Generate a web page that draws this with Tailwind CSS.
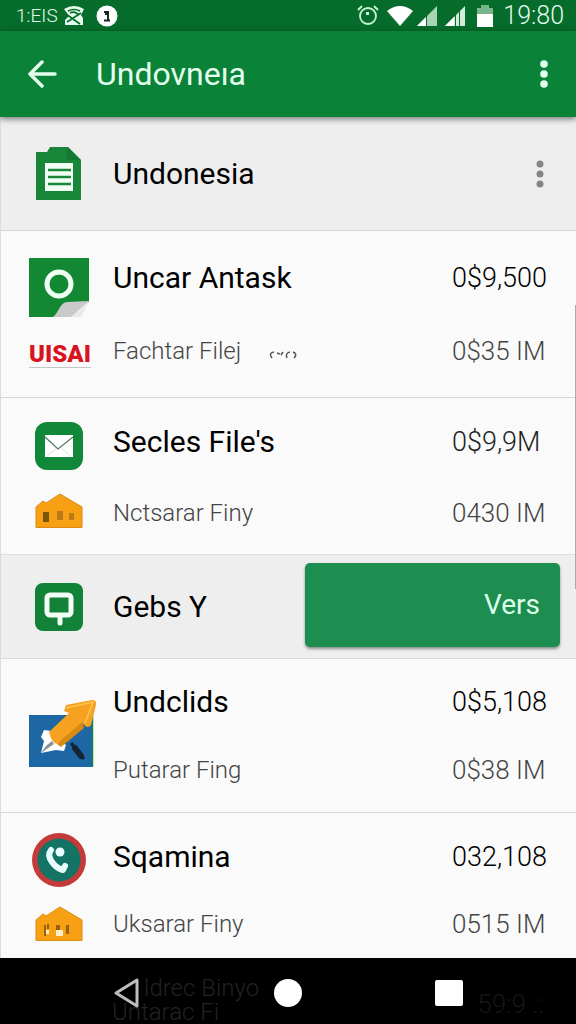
<!DOCTYPE html>
<html lang="en">
<head>
<meta charset="utf-8">
<meta name="viewport" content="width=device-width, initial-scale=1">
<title>Undonesia</title>
<script src="https://cdn.jsdelivr.net/npm/@tailwindcss/browser@4"></script>
</head>
<body class="flex min-h-screen flex-col overflow-x-hidden bg-[#fafafa] font-[Roboto,sans-serif] text-black">
<svg class="hidden" aria-hidden="true">
  <symbol id="house" viewBox="0 0 48 36">
    <path fill="#f7a014" d="M1 14 8 8l3 2L25 1l22 13v21H1z"/>
    <path fill="none" stroke="#db8b12" d="M1 14 8 8l3 2L25 1l22 13v20.500H1z"/>
  </symbol>
</svg>

<div class="flex h-[31px] shrink-0 items-center bg-[#066c2b] pr-3 pl-4 text-[#e4faec]">
  <span class="w-10 text-[19px] leading-none font-light">1:EIS</span>
  <svg class="ml-2 h-5 w-5" viewBox="0 0 20 20" aria-hidden="true"><path fill="#e4faec" d="M0 3q10-6 20 0l-3 6 2 3v7H1v-5l4-4z"/><path fill="none" stroke="#066c2b" stroke-width="1.700" d="M4 5q6-3 12 0M2 8l14 10M17 7 3 16M6 7q4-2 8 1"/></svg>
  <svg class="ml-3 h-[22px] w-[22px]" viewBox="0 0 22 22" aria-hidden="true"><circle cx="11" cy="11" r="10.500" fill="#fff"/><path d="M8 7h4v8M8 15.500h6M9 9h3" fill="none" stroke="#222" stroke-width="2"/></svg>
  <div class="ml-auto flex items-center">
    <svg class="h-[22px] w-[22px]" viewBox="0 0 22 22" fill="none" stroke="#c9f4d8" stroke-width="1.800" aria-hidden="true"><circle cx="11" cy="11" r="8"/><path d="M1 5l4-4M17 1l4 4"/><path d="M10.500 7v3" stroke-width="3"/></svg>
    <svg class="ml-2 h-5 w-[26px]" viewBox="0 0 26 20" aria-hidden="true"><path fill="#fff" d="M13 20 0 5q13-10 26 0z"/></svg>
    <svg class="ml-1 h-5 w-5" viewBox="0 0 20 20" aria-hidden="true"><path fill="#a9d3b6" d="M20 0v20H0z"/><path fill="#fff" d="M9 11v9H0z"/><path stroke="#066c2b" d="M9.500 10v10"/></svg>
    <svg class="ml-2 h-5 w-5" viewBox="0 0 20 20" aria-hidden="true"><path fill="#d3ecd9" d="M20 0v20H0z"/><path fill="#fff" d="M9 11v9H0z"/><path stroke="#066c2b" d="M10.500 9v11M14.500 5v15"/></svg>
    <svg class="ml-3 h-[22px] w-4" viewBox="0 0 16 22" aria-hidden="true"><path fill="#79b58a" d="M4 0h8v3h4v7H0V3h4z"/><path fill="#fff" d="M0 9h16v13H0z"/></svg>
    <span class="ml-[10px] text-[25px] leading-none font-light">19:80</span>
  </div>
</div>

<header class="relative z-10 flex h-[86px] shrink-0 items-center bg-[#0a8339] pr-3 pl-7 text-[#e4ffed] shadow-[0_2px_6px_rgba(0,0,0,0.5)]">
  <button class="flex h-10 w-[30px] items-center" aria-label="Back">
    <svg class="h-7 w-[30px]" viewBox="0 0 30 28" fill="none" stroke="currentColor" stroke-width="3.500" stroke-linecap="round" stroke-linejoin="round"><path d="M27 14H2M14 2 2 14l12 12"/></svg>
  </button>
  <h1 class="ml-[38px] flex-1 text-[32px] leading-10">Undovneıa</h1>
  <button class="flex h-10 w-10 items-center justify-center" aria-label="More options">
    <svg class="h-7 w-2" viewBox="0 0 8 28" fill="currentColor"><circle cx="4" cy="4" r="3.800"/><circle cx="4" cy="14" r="3.800"/><circle cx="4" cy="24" r="3.800"/></svg>
  </button>
</header>

<main class="relative flex-1 border-l border-[#dcdcdc]">
  <section class="flex h-[114px] items-center border-b border-[#d9dbdb] bg-[#eeeeee] pr-4">
    <div class="flex w-28 shrink-0 pl-[35px]">
      <svg class="h-[53px] w-[45px]" viewBox="0 0 45 53" aria-hidden="true"><path fill="#198639" d="M0 5h11l3-5h18l13 13v40H0z"/><path fill="#0e7030" d="M32 0l13 13H30z" opacity=".6"/><path fill="#f1fff4" d="M9 16h28v28H9z"/><path stroke="#198639" stroke-width="2.500" d="M12 23h23M12 30h23M12 37h23"/></svg>
    </div>
    <h2 class="flex-1 text-[30px] leading-10">Undonesia</h2>
    <button class="flex h-10 w-10 items-center justify-center text-[#858585]" aria-label="Undonesia options">
      <svg class="h-7 w-2" viewBox="0 0 8 28" fill="currentColor"><circle cx="4" cy="4" r="3.500"/><circle cx="4" cy="14" r="3.500"/><circle cx="4" cy="24" r="3.500"/></svg>
    </button>
  </section>

  <section class="flex border-b border-[#d3d8d5] pt-[27px] pb-[26px]">
    <div class="flex w-28 shrink-0 flex-col items-start pl-7">
      <svg class="h-[59px] w-[60px]" viewBox="0 0 60 59" aria-hidden="true"><path fill="#128833" d="M0 0h60v44L24 59H0z"/><path fill="#c9c9c9" d="M24 59c6-4 6-14 14-15l22-1-18 16z"/><path fill="#e9e9e9" d="M60 43 42 59h10z"/><circle cx="30" cy="26" r="12" fill="none" stroke="#eefff3" stroke-width="5"/><path fill="#eefff3" d="m26 14 2 3 2-1 3 1 1-3z"/></svg>
      <div class="mt-6 flex w-[62px] justify-center border-b border-[#c5c5c5] text-[24px] leading-[26px] font-black text-[#d8141f]">UISAI</div>
    </div>
    <div class="flex flex-1 flex-col gap-[33px]">
      <div class="flex text-[30px] leading-10"><h3 class="flex-1">Uncar Antask</h3><span class="w-[124px] text-[27px] font-light">0$9,500</span></div>
      <div class="flex text-[26px] leading-10 font-light text-[#444]">
        <p class="flex flex-1 items-center gap-7 text-[24px]">Fachtar Filej
          <svg class="mt-2 h-2 w-7" viewBox="0 0 28 8" fill="none" stroke="#555" stroke-width="1.500" aria-hidden="true"><path d="M3 7Q-1 2 5 1M8 2l3 1M14 1l-2 3M18 7q-2-5 3-6M24 1q5 2 1 6"/></svg>
        </p>
        <span class="w-[124px]">0$35 IM</span>
      </div>
    </div>
  </section>

  <section class="flex border-b border-[#dcdfdd] pt-6 pb-[21px]">
    <div class="flex w-28 shrink-0 flex-col items-start gap-[23px] pl-[34px]">
      <svg class="h-12 w-12" viewBox="0 0 48 48" aria-hidden="true"><rect width="48" height="48" rx="12" fill="#11873a"/><path fill="#fff" d="M10 13h28v22H10z"/><path fill="none" stroke="#527867" stroke-width="1.300" d="m10 15 13 12 15-12"/><path fill="none" stroke="#d8e2dc" d="m12 34 9-7M36 34l-9-7"/></svg>
      <svg class="h-9 w-12" viewBox="0 0 48 36" aria-hidden="true"><use href="#house"/><path fill="#7d570b" d="M8 19h6v10H8z"/><path fill="#ba7a17" d="M22 18h6v9h-6zM34 20h5v7h-5z"/></svg>
    </div>
    <div class="flex flex-1 flex-col gap-[31px]">
      <div class="flex text-[30px] leading-10"><h3 class="flex-1">Secles File's</h3><span class="w-[124px] text-[27px] font-light text-[#222]">0$9,9M</span></div>
      <div class="flex text-[26px] leading-10 font-light text-[#444]"><p class="flex-1 text-[24px]">Nctsarar Finy</p><span class="w-[124px]">0430 IM</span></div>
    </div>
  </section>

  <section class="flex h-[104px] items-center border-b border-[#d9dbdb] bg-[#eeeeee] pr-4">
    <div class="flex w-28 shrink-0 pl-[34px]">
      <svg class="h-12 w-12" viewBox="0 0 48 48" aria-hidden="true"><rect width="48" height="48" rx="8" fill="#128238"/><rect x="12" y="12" width="24" height="20" rx="3" fill="none" stroke="#f1fff5" stroke-width="5"/><path stroke="#f1fff5" stroke-width="5" stroke-linecap="round" d="M25 34v6"/></svg>
    </div>
    <h3 class="flex-1 text-[30px] leading-10">Gebs Y</h3>
    <button class="mb-1 h-[84px] w-[255px] rounded-[5px] bg-[#1d8d50] pr-5 text-right text-[28px] text-[#dcffeb] shadow-[0_2px_3px_rgba(0,0,0,0.4)]">Vers</button>
  </section>

  <section class="flex border-b border-[#d7dad8] pt-[23px] pb-[22px]">
    <div class="flex w-28 shrink-0 items-start pt-[17px] pl-7">
      <svg class="h-[69px] w-[69px]" viewBox="0 0 69 69" aria-hidden="true"><path fill="#1d67a4" d="M0 16h64v52H0z"/><path stroke="#168542" stroke-width="1.500" fill="none" d="M63.500 16v51.500"/><path fill="#fff" d="m12 54 3-12-3-4 3-7 7 1 12 12 3 2-2 6-8-1z"/><path fill="#8a9097" d="m12 54 5-7 6-5 2 3z"/><path fill="#f6a120" d="m20 33 20-19-5-2 2-6 26-5q5 0 4 5l-5 20q-3 4-7 0l-2-2-25 21q-6-2-8-12z"/><path fill="#d98a10" d="m28 45 25-22 2 6-23 19z"/><path fill="none" stroke="#ffc454" stroke-width="1.500" d="m37 9 27-6-8 21"/><path stroke="#142434" stroke-width="6" stroke-linecap="round" d="m46 49 6 8"/><path stroke="#142434" stroke-width="3" d="m42 44 13 16"/></svg>
    </div>
    <div class="flex flex-1 flex-col gap-7">
      <div class="flex text-[30px] leading-10"><h3 class="flex-1">Undclids</h3><span class="w-[124px] text-[27px] font-light">0$5,108</span></div>
      <div class="flex text-[26px] leading-10 font-light text-[#444]"><p class="flex-1 text-[24px]">Putarar Fing</p><span class="w-[124px]">0$38 IM</span></div>
    </div>
  </section>

  <section class="flex pt-5 pb-[10px]">
    <div class="flex w-28 shrink-0 flex-col items-start gap-[19px] pl-[31px]">
      <svg class="h-[54px] w-[54px]" viewBox="0 0 54 54" aria-hidden="true"><circle cx="27" cy="27" r="27" fill="#c43a39"/><circle cx="27" cy="27" r="21.500" fill="#137365"/><path fill="none" stroke="#e9fdff" stroke-width="6" stroke-linecap="round" stroke-linejoin="round" d="M19 17q-4 5 1 12 4 6 11 8l2-4"/><circle cx="28" cy="19" r="4.500" fill="#e9fdff"/></svg>
      <svg class="ml-[3px] h-9 w-12" viewBox="0 0 48 36" aria-hidden="true"><use href="#house"/><path fill="#98620c" d="M9 19h2v11H9zM12 18h2v5h-2zM21 19h4v6h-4zM31 19h3v9h-3z"/><path fill="#ffeec7" d="M11 24h3v4h-3zM21 24h7v6h-7z"/></svg>
    </div>
    <div class="flex flex-1 flex-col gap-[27px] pt-1">
      <div class="flex text-[30px] leading-10"><h3 class="flex-1">Sqamina</h3><span class="w-[124px] text-[27px] font-light">032,108</span></div>
      <div class="flex text-[26px] leading-10 font-light text-[#444]"><p class="flex-1 text-[24px]">Uksarar Finy</p><span class="w-[124px]">0515 IM</span></div>
    </div>
  </section>
  <div class="absolute top-[188px] right-0 h-[284px] w-px bg-[#a9abad]"></div>
</main>

<nav class="relative flex h-[66px] shrink-0 items-center justify-center gap-[133px] overflow-hidden bg-black pt-1" aria-label="System">
  <div class="absolute inset-0 flex justify-between pt-[18px] pr-8 pl-28 text-[24px] leading-6 font-light text-[#222]" aria-hidden="true">
    <p><span class="pl-8">ldrec Binyo</span><br>Untarac Fi</p>
    <p class="pt-4 text-[26px] text-[#161616]">59:9 .:</p>
  </div>
  <button class="relative" aria-label="Back"><svg class="h-[30px] w-7" viewBox="0 0 28 30"><path fill="#000" stroke="#bdbdbd" stroke-width="3" stroke-linejoin="round" d="M24 2v26L3 15z"/></svg></button>
  <button class="relative h-7 w-7 rounded-full bg-white" aria-label="Home"></button>
  <button class="relative h-[26px] w-7 rounded-[2px] bg-white" aria-label="Recent apps"></button>
</nav>
</body>
</html>
